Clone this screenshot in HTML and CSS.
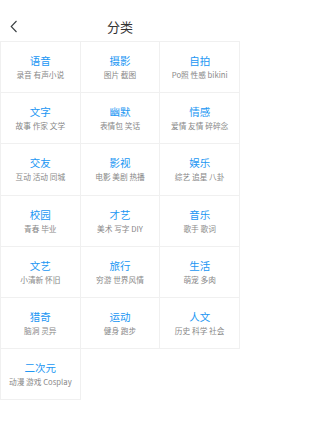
FILE: index.html
```html
<!DOCTYPE html>
<html lang="zh">
<head>
<meta charset="utf-8">
<title>分类</title>
<link rel="stylesheet" href="styles.css">
</head>
<body>
<div class="page">
  <header class="header">
    <svg class="back" width="8" height="13" viewBox="0 0 8 13"><path d="M6.5 1 L1.2 6.5 L6.5 12" fill="none" stroke="#3a3f42" stroke-width="1.1"/></svg>
    <span class="title">分类</span>
  </header>
  <div class="grid">
    <div class="cell"><div class="name">语音</div><div class="sub">录音 有声小说</div></div>
    <div class="cell"><div class="name">摄影</div><div class="sub">图片 截图</div></div>
    <div class="cell"><div class="name">自拍</div><div class="sub">Po照 性感 bikini</div></div>
    <div class="cell"><div class="name">文字</div><div class="sub">故事 作家 文学</div></div>
    <div class="cell"><div class="name">幽默</div><div class="sub">表情包 笑话</div></div>
    <div class="cell"><div class="name">情感</div><div class="sub">爱情 友情 碎碎念</div></div>
    <div class="cell"><div class="name">交友</div><div class="sub">互动 活动 同城</div></div>
    <div class="cell"><div class="name">影视</div><div class="sub">电影 美剧 热播</div></div>
    <div class="cell"><div class="name">娱乐</div><div class="sub">综艺 追星 八卦</div></div>
    <div class="cell"><div class="name">校园</div><div class="sub">青春 毕业</div></div>
    <div class="cell"><div class="name">才艺</div><div class="sub">美术 写字 DIY</div></div>
    <div class="cell"><div class="name">音乐</div><div class="sub">歌手 歌词</div></div>
    <div class="cell"><div class="name">文艺</div><div class="sub">小清新 怀旧</div></div>
    <div class="cell"><div class="name">旅行</div><div class="sub">穷游 世界风情</div></div>
    <div class="cell"><div class="name">生活</div><div class="sub">萌宠 多肉</div></div>
    <div class="cell"><div class="name">猎奇</div><div class="sub">脑洞 灵异</div></div>
    <div class="cell"><div class="name">运动</div><div class="sub">健身 跑步</div></div>
    <div class="cell"><div class="name">人文</div><div class="sub">历史 科学 社会</div></div>
    <div class="cell"><div class="name">二次元</div><div class="sub">动漫 游戏 Cosplay</div></div>
  </div>
</div>
</body>
</html>
```
FILE: styles.css
```css
* { box-sizing: border-box; }
html, body { margin: 0; padding: 0; background: #fff; }
body { font-family: "Noto Sans CJK SC", "Noto Sans", sans-serif; }
.page { width: 240px; }
.header {
  position: relative;
  height: 42px;
  border-bottom: 1px solid #f0f0f0;
  display: flex;
  align-items: flex-start;
  justify-content: center;
  padding-top: 19px;
}
.back { position: absolute; left: 10px; top: 20px; }
.title { font-size: 13px; color: #333; line-height: 16px; }
.grid {
  display: grid;
  grid-template-columns: repeat(3, 1fr);
  border-left: 1px solid #f0f0f0;
}
.cell {
  height: 51.2px;
  border-right: 1px solid #f0f0f0;
  border-bottom: 1px solid #f0f0f0;
  display: flex;
  flex-direction: column;
  align-items: center;
  justify-content: center;
}
.name { font-size: 10.5px; line-height: 14px; color: #2196f3; }
.sub { font-size: 7.7px; line-height: 10px; color: #888; margin-top: 2px; white-space: nowrap; }
```
